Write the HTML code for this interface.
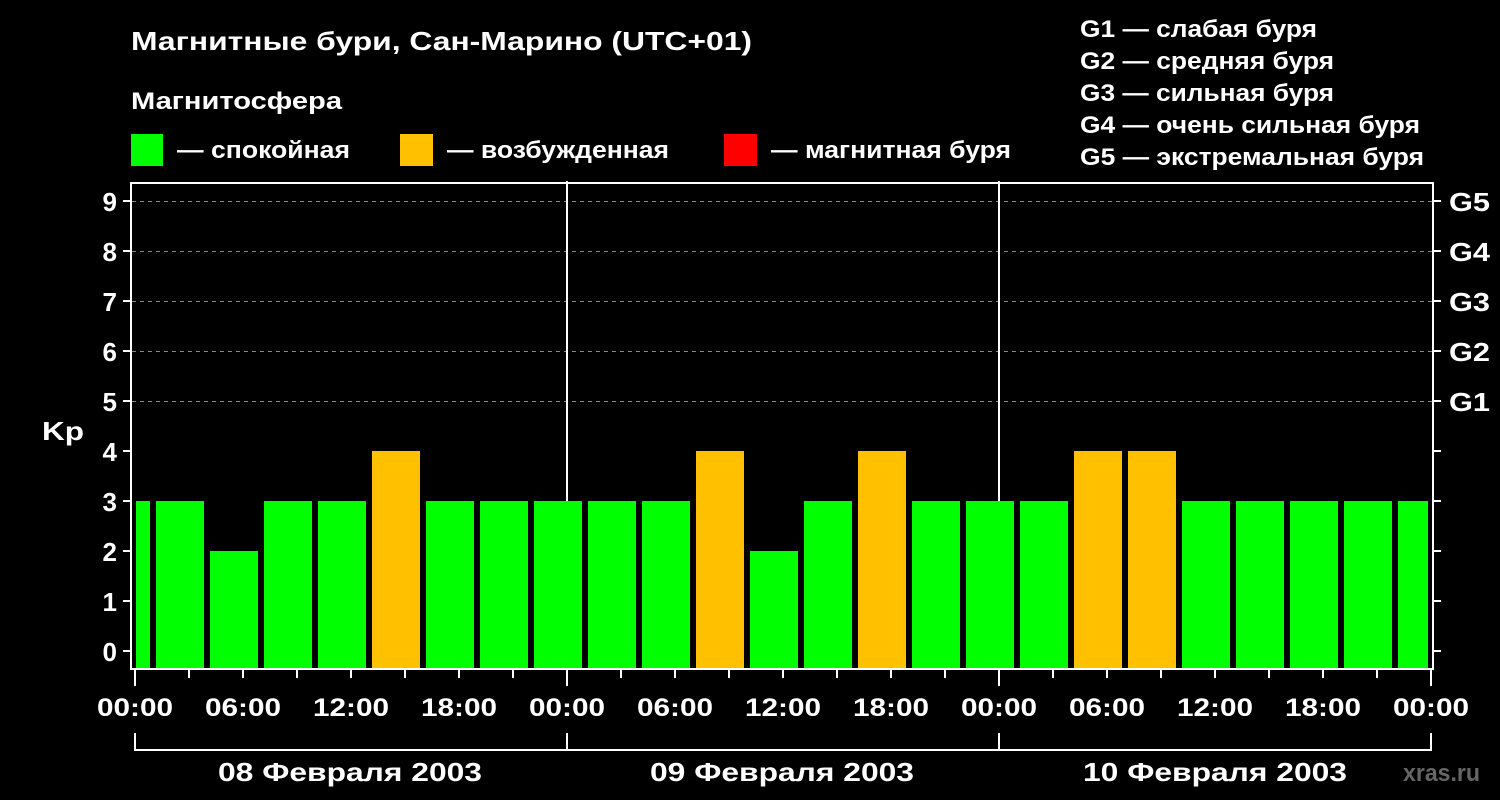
<!DOCTYPE html><html><head><meta charset="utf-8"><style>body{margin:0;background:#000}svg{display:block}text{font-family:"Liberation Sans",sans-serif;font-weight:bold;fill:#fff}</style></head><body>
<svg width="1500" height="800" xmlns="http://www.w3.org/2000/svg">
<rect width="1500" height="800" fill="#000"/>
<text x="131" y="50" font-size="26" textLength="621" lengthAdjust="spacingAndGlyphs">Магнитные бури, Сан-Марино (UTC+01)</text>
<text x="131" y="109" font-size="24" textLength="211" lengthAdjust="spacingAndGlyphs">Магнитосфера</text>
<rect x="131" y="134" width="32" height="32" fill="#00ff00"/><text x="177" y="158" font-size="24" textLength="173" lengthAdjust="spacingAndGlyphs">— спокойная</text>
<rect x="400" y="134" width="33" height="32" fill="#ffc000"/><text x="447" y="158" font-size="24" textLength="222" lengthAdjust="spacingAndGlyphs">— возбужденная</text>
<rect x="724" y="134" width="33" height="32" fill="#ff0000"/><text x="771" y="158" font-size="24" textLength="240" lengthAdjust="spacingAndGlyphs">— магнитная буря</text>
<g font-size="24"><text x="1080" y="37" textLength="237" lengthAdjust="spacingAndGlyphs">G1 — слабая буря</text><text x="1080" y="69" textLength="254" lengthAdjust="spacingAndGlyphs">G2 — средняя буря</text><text x="1080" y="101" textLength="254" lengthAdjust="spacingAndGlyphs">G3 — сильная буря</text><text x="1080" y="133" textLength="340" lengthAdjust="spacingAndGlyphs">G4 — очень сильная буря</text><text x="1080" y="165" textLength="344" lengthAdjust="spacingAndGlyphs">G5 — экстремальная буря</text></g>
<g stroke="#888" stroke-dasharray="4,4" stroke-width="1"><line x1="132" x2="1432" y1="201.5" y2="201.5"/><line x1="132" x2="1432" y1="251.5" y2="251.5"/><line x1="132" x2="1432" y1="301.5" y2="301.5"/><line x1="132" x2="1432" y1="351.5" y2="351.5"/><line x1="132" x2="1432" y1="401.5" y2="401.5"/></g>
<g fill="#00ff00">
<rect x="136" y="501" width="14" height="167"/>
<rect x="156" y="501" width="48" height="167"/>
<rect x="210" y="551" width="48" height="117"/>
<rect x="264" y="501" width="48" height="167"/>
<rect x="318" y="501" width="48" height="167"/>
<rect x="372" y="451" width="48" height="217" fill="#ffc000"/>
<rect x="426" y="501" width="48" height="167"/>
<rect x="480" y="501" width="48" height="167"/>
<rect x="534" y="501" width="48" height="167"/>
<rect x="588" y="501" width="48" height="167"/>
<rect x="642" y="501" width="48" height="167"/>
<rect x="696" y="451" width="48" height="217" fill="#ffc000"/>
<rect x="750" y="551" width="48" height="117"/>
<rect x="804" y="501" width="48" height="167"/>
<rect x="858" y="451" width="48" height="217" fill="#ffc000"/>
<rect x="912" y="501" width="48" height="167"/>
<rect x="966" y="501" width="48" height="167"/>
<rect x="1020" y="501" width="48" height="167"/>
<rect x="1074" y="451" width="48" height="217" fill="#ffc000"/>
<rect x="1128" y="451" width="48" height="217" fill="#ffc000"/>
<rect x="1182" y="501" width="48" height="167"/>
<rect x="1236" y="501" width="48" height="167"/>
<rect x="1290" y="501" width="48" height="167"/>
<rect x="1344" y="501" width="48" height="167"/>
<rect x="1398" y="501" width="30" height="167"/>
</g>
<g stroke="#fff" stroke-width="2" fill="none">
<path d="M131 183V669H1433V183Z"/>
<line x1="567" y1="181" x2="567" y2="501"/><line x1="999" y1="181" x2="999" y2="501"/>
<path d="M123 201h8M123 251h8M123 301h8M123 351h8M123 401h8M123 451h8M123 501h8M123 551h8M123 601h8M123 651h8"/>
<path d="M1433 201h8M1433 251h8M1433 301h8M1433 351h8M1433 401h8M1433 451h8M1433 501h8M1433 551h8M1433 601h8M1433 651h8"/>
<path d="M135 670v16M189 670v8M243 670v8M297 670v8M351 670v8M405 670v8M459 670v8M513 670v8M567 670v16M621 670v8M675 670v8M729 670v8M783 670v8M837 670v8M891 670v8M945 670v8M999 670v16M1053 670v8M1107 670v8M1161 670v8M1215 670v8M1269 670v8M1323 670v8M1377 670v8M1431 670v16"/>
<path d="M135 733v17H1431V733M567 733v17M999 733v17"/>
</g>
<g font-size="26" text-anchor="end"><text x="117" y="211">9</text><text x="117" y="261">8</text><text x="117" y="311">7</text><text x="117" y="361">6</text><text x="117" y="411">5</text><text x="117" y="461">4</text><text x="117" y="511">3</text><text x="117" y="561">2</text><text x="117" y="611">1</text><text x="117" y="661">0</text></g>
<text x="42" y="440" font-size="26" textLength="42" lengthAdjust="spacingAndGlyphs">Kp</text>
<g font-size="26"><text x="1449" y="211" textLength="41" lengthAdjust="spacingAndGlyphs">G5</text><text x="1449" y="261" textLength="41" lengthAdjust="spacingAndGlyphs">G4</text><text x="1449" y="311" textLength="41" lengthAdjust="spacingAndGlyphs">G3</text><text x="1449" y="361" textLength="41" lengthAdjust="spacingAndGlyphs">G2</text><text x="1449" y="411" textLength="41" lengthAdjust="spacingAndGlyphs">G1</text></g>
<g font-size="25">
<text x="97" y="716" textLength="76" lengthAdjust="spacingAndGlyphs">00:00</text><text x="205" y="716" textLength="76" lengthAdjust="spacingAndGlyphs">06:00</text><text x="313" y="716" textLength="76" lengthAdjust="spacingAndGlyphs">12:00</text><text x="421" y="716" textLength="76" lengthAdjust="spacingAndGlyphs">18:00</text><text x="529" y="716" textLength="76" lengthAdjust="spacingAndGlyphs">00:00</text><text x="637" y="716" textLength="76" lengthAdjust="spacingAndGlyphs">06:00</text><text x="745" y="716" textLength="76" lengthAdjust="spacingAndGlyphs">12:00</text><text x="853" y="716" textLength="76" lengthAdjust="spacingAndGlyphs">18:00</text><text x="961" y="716" textLength="76" lengthAdjust="spacingAndGlyphs">00:00</text><text x="1069" y="716" textLength="76" lengthAdjust="spacingAndGlyphs">06:00</text><text x="1177" y="716" textLength="76" lengthAdjust="spacingAndGlyphs">12:00</text><text x="1285" y="716" textLength="76" lengthAdjust="spacingAndGlyphs">18:00</text><text x="1393" y="716" textLength="76" lengthAdjust="spacingAndGlyphs">00:00</text>
</g>
<g font-size="26"><text x="218" y="781" textLength="264" lengthAdjust="spacingAndGlyphs">08 Февраля 2003</text><text x="650" y="781" textLength="264" lengthAdjust="spacingAndGlyphs">09 Февраля 2003</text><text x="1083" y="781" textLength="264" lengthAdjust="spacingAndGlyphs">10 Февраля 2003</text></g>
<text x="1403" y="781" font-size="24" style="fill:#666" textLength="77" lengthAdjust="spacingAndGlyphs">xras.ru</text>
</svg></body></html>
